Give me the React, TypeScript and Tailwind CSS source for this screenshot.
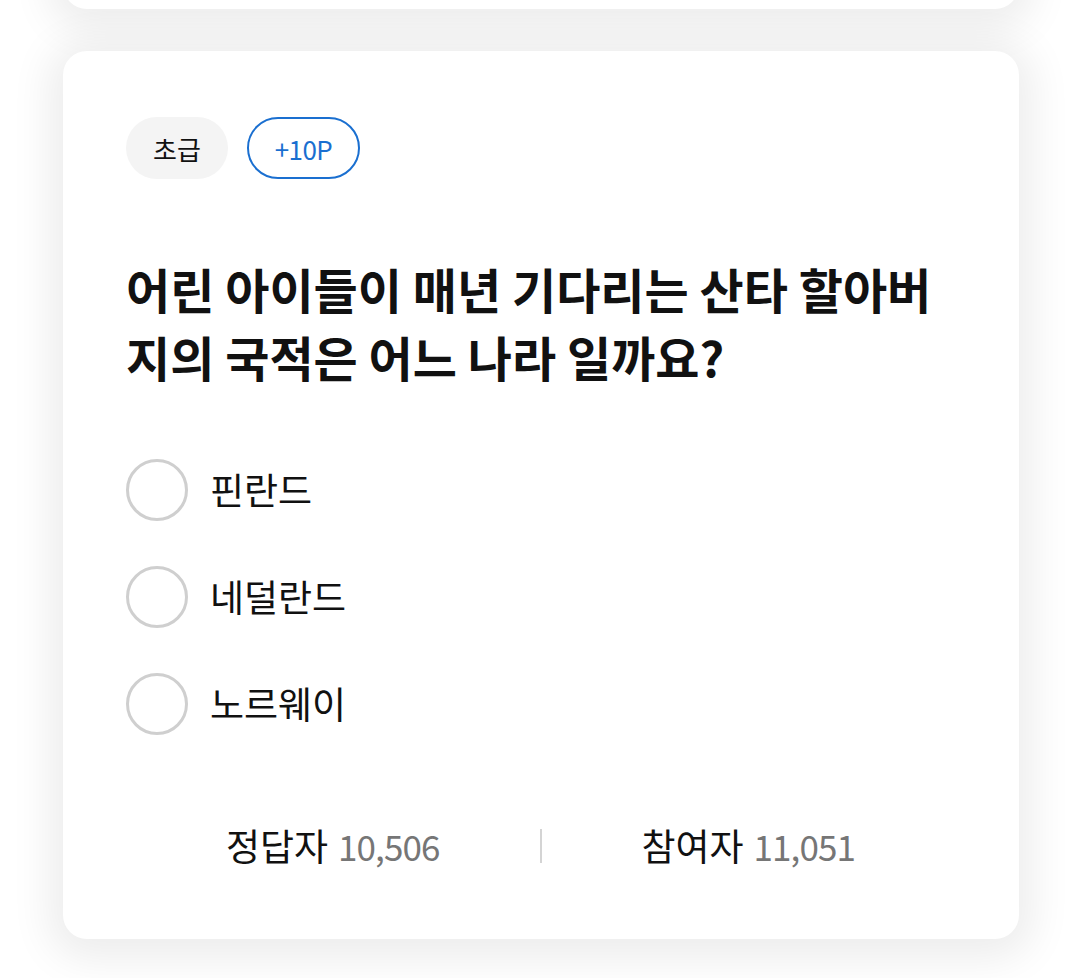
import React from "react";

const font = { fontFamily: '"Noto Sans CJK KR", "Noto Sans", sans-serif' };

const options = ["핀란드", "네덜란드", "노르웨이"];

function Chip({ children, outlined }: { children: React.ReactNode; outlined?: boolean }) {
  if (outlined) {
    return (
      <span className="flex h-[62px] items-center rounded-full border-2 border-[#1a6fd0] px-[26px] text-[26px] tracking-tight text-[#1a6fd0]">
        {children}
      </span>
    );
  }
  return (
    <span className="flex h-[62px] items-center rounded-full bg-[#f4f4f4] px-[27px] text-[26px] text-[#111]">
      {children}
    </span>
  );
}

export default function App() {
  return (
    <div className="min-h-screen overflow-hidden bg-white pl-[63px] pr-[61px]" style={font}>
      {/* previous card peeking in at the top */}
      <div className="-mt-[50px] h-[59px] rounded-[24px] bg-white shadow-[0_6px_40px_14px_rgba(0,0,0,0.075)]" />

      {/* quiz card */}
      <div className="mt-[42px] rounded-[24px] bg-white pl-[63px] pr-[64px] pt-[66px] pb-[68px] shadow-[0_6px_40px_14px_rgba(0,0,0,0.075)]">
        <div className="flex gap-[19px]">
          <Chip>초급</Chip>
          <Chip outlined>+10P</Chip>
        </div>

        <h2 className="mt-[75px] break-all text-[48px] font-bold leading-[68px] text-[#111]">
          어린 아이들이 매년 기다리는 산타 할아버지의 국적은 어느 나라 일까요?
        </h2>

        <ul className="mt-[69px] flex flex-col gap-[45px]">
          {options.map((opt) => (
            <li key={opt} className="flex items-center gap-[22px]">
              <span className="h-[62px] w-[62px] rounded-full border-[3px] border-[#cfcfcf]" />
              <span className="text-[37px] text-[#111]">{opt}</span>
            </li>
          ))}
        </ul>

        <div className="mt-[86px] flex h-[50px] items-center">
          <div className="flex flex-1 items-center justify-center gap-[10px]">
            <span className="text-[37px] text-[#111]">정답자</span>
            <span className="text-[35px] tracking-tight text-[#767676]">10,506</span>
          </div>
          <div className="h-[34px] w-[2px] bg-[#d4d4d4]" />
          <div className="flex flex-1 items-center justify-center gap-[10px]">
            <span className="text-[37px] text-[#111]">참여자</span>
            <span className="text-[35px] tracking-tight text-[#767676]">11,051</span>
          </div>
        </div>
      </div>
    </div>
  );
}
